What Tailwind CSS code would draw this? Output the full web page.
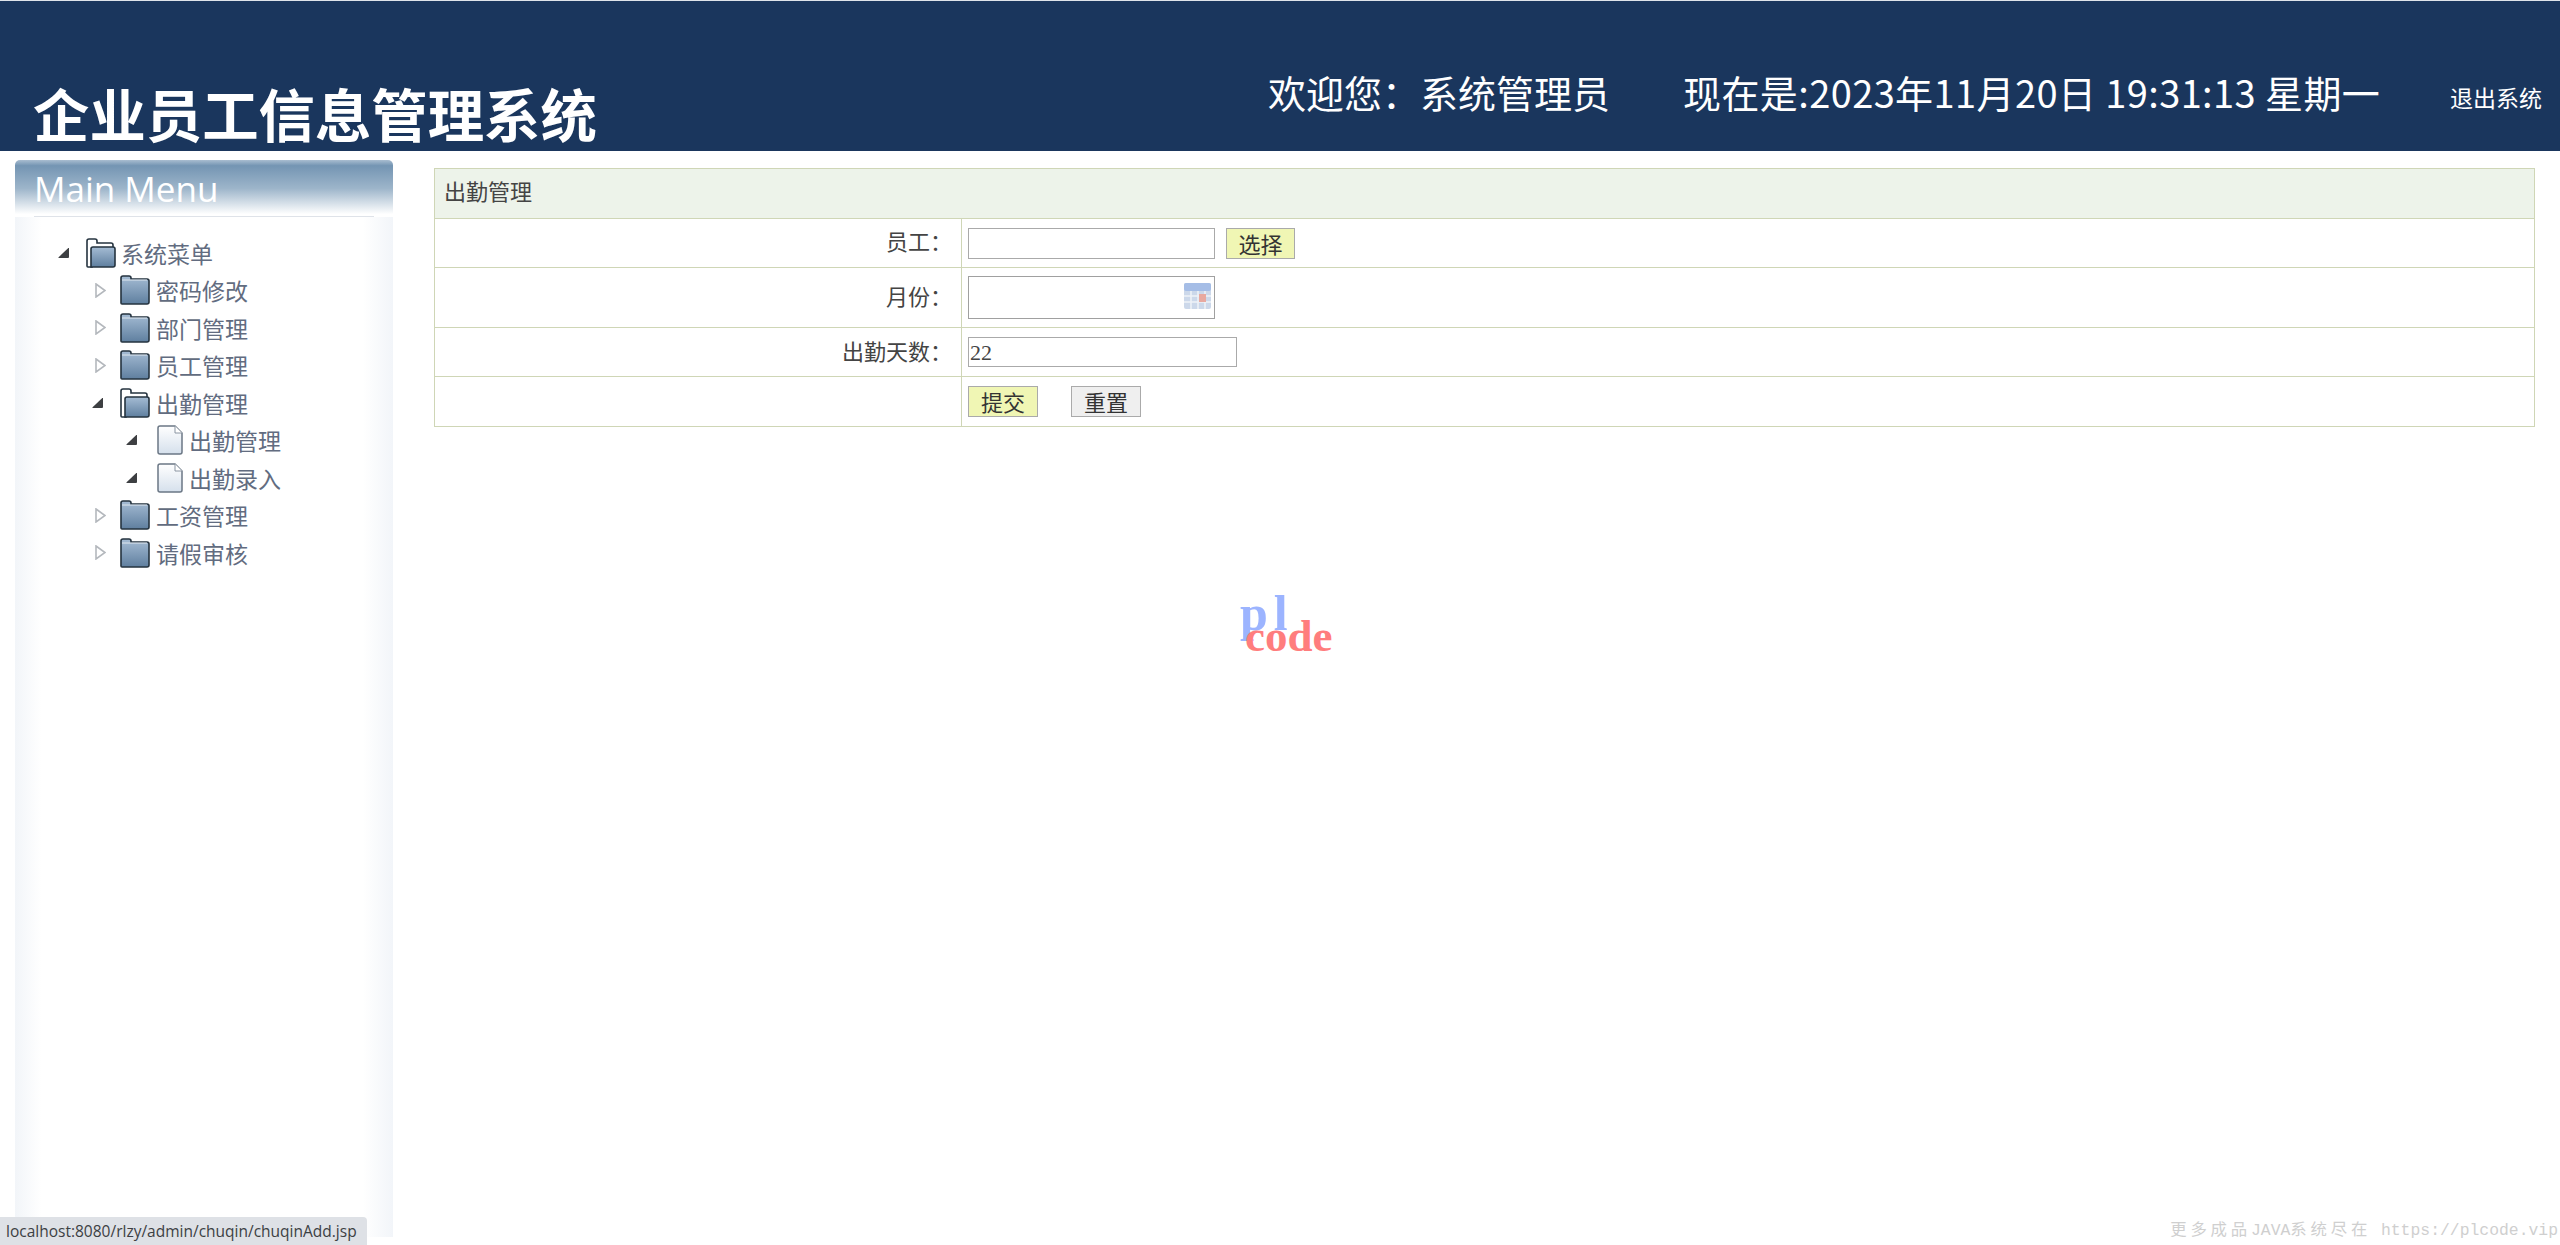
<!DOCTYPE html>
<html lang="zh">
<head>
  <meta charset="UTF-8" />
  <title>企业员工信息管理系统</title>
  <script src="https://cdn.jsdelivr.net/npm/@tailwindcss/browser@4"></script>
</head>
<body class="relative h-screen overflow-hidden bg-white font-['Noto_Sans_CJK_SC',sans-serif]">

  <!-- icons used by the tree -->
  <svg class="absolute w-0 h-0">
    <defs>
      <linearGradient id="folderFill" x1="0" y1="0" x2="0" y2="1">
        <stop offset="0" stop-color="#a5bcd4" />
        <stop offset="1" stop-color="#5f7f9f" />
      </linearGradient>
      <linearGradient id="fileFill" x1="0" y1="0" x2="0" y2="1">
        <stop offset="0" stop-color="#ffffff" />
        <stop offset="1" stop-color="#d5e0ec" />
      </linearGradient>
    </defs>
    <symbol id="folder-closed" viewBox="0 0 30 30">
      <path d="M1 28V3q0-2 2-2h6q2 0 2 2v1h16q2 0 2 2v21q0 2-2 2H2q-1 0-1-1z" fill="url(#folderFill)" stroke="#25333f" stroke-width="1.6" />
      <path d="M2 5h25" stroke="#dfe7ef" stroke-width="1" />
    </symbol>
    <symbol id="folder-open" viewBox="0 0 30 30">
      <path d="M1 28V3q0-2 2-2h6q2 0 2 2v2h14q2 0 2 2v3H6v19H2q-1 0-1-1z" fill="#fff" stroke="#25333f" stroke-width="1.6" />
      <path d="M5 29V11q0-2 2-2h20q2 0 2 2v16q0 2-2 2z" fill="url(#folderFill)" stroke="#25333f" stroke-width="1.6" />
    </symbol>
    <symbol id="file" viewBox="0 0 26 30">
      <path d="M1 3q0-2 2-2h15l7 7v19q0 2-2 2H3q-2 0-2-2z" fill="url(#fileFill)" stroke="#6b7785" stroke-width="1.5" />
      <path d="M18 1v7h7" fill="#fff" stroke="#8a95a2" stroke-width="1" />
    </symbol>
    <symbol id="arrow-closed" viewBox="0 0 11 15">
      <path d="M1 1l9 6.500-9 6.500z" fill="#fff" stroke="#b4b8bd" stroke-width="1.600" />
    </symbol>
    <symbol id="arrow-open" viewBox="0 0 12 10">
      <path d="M11 0v9q0 1-1 1H1q-1 0-.4-.8L10 .2q1-.9 1-.2z" fill="#3d3f42" />
    </symbol>
  </svg>

  <!-- Header -->
  <header class="h-[151px] bg-[#1a365d] border-t border-[#dfe4ea] flex items-end text-white">
    <h1 class="ml-[33px] mb-[-2px] text-[56.400px] leading-[80px] font-bold">企业员工信息管理系统</h1>
    <div class="ml-auto flex items-center self-end h-[112px] pr-[18px] text-[38px] whitespace-nowrap">
      <span class="w-[415px] mb-[8px]">欢迎您：系统管理员</span>
      <span class="w-[767px] mb-[8px] tracking-[0.4px]">现在是:2023年11月20日 19:31:13 星期一</span>
      <a href="#" class="text-[23px] mt-[4px]">退出系统</a>
    </div>
  </header>

  <div class="flex items-start">
    <!-- Left menu -->
    <aside class="w-[378px] h-[1077px] ml-[15px] mt-[9px] shrink-0 rounded-t-[5px] bg-[linear-gradient(to_right,#f2f5f9,#ffffff_7%,#ffffff_92%,#f2f5f9)]">
      <div class="h-[57px] rounded-t-[5px] bg-[linear-gradient(to_bottom,#a9bdd0,#7495b3_10%,#9db5ca_50%,#ffffff_95%)]">
        <div class="mx-[19px] h-[57px] border-b border-[#dfe3e9] text-[35px] leading-[58px] text-white font-['Open_Sans',sans-serif]">Main Menu</div>
      </div>
      <ul class="mt-[17px] text-[23px] text-[#626c80]">
        <li class="h-[37.5px] flex items-center pl-[43px]">
          <svg class="w-[12px] h-[10px] mr-[16px]"><use href="#arrow-open" /></svg>
          <svg class="w-[30px] h-[30px] mr-[5px]"><use href="#folder-open" /></svg>系统菜单
        </li>
        <li class="h-[37.5px] flex items-center pl-[80px]">
          <svg class="w-[11px] h-[15px] mr-[14px]"><use href="#arrow-closed" /></svg>
          <svg class="w-[30px] h-[30px] mr-[6px]"><use href="#folder-closed" /></svg>密码修改
        </li>
        <li class="h-[37.5px] flex items-center pl-[80px]">
          <svg class="w-[11px] h-[15px] mr-[14px]"><use href="#arrow-closed" /></svg>
          <svg class="w-[30px] h-[30px] mr-[6px]"><use href="#folder-closed" /></svg>部门管理
        </li>
        <li class="h-[37.5px] flex items-center pl-[80px]">
          <svg class="w-[11px] h-[15px] mr-[14px]"><use href="#arrow-closed" /></svg>
          <svg class="w-[30px] h-[30px] mr-[6px]"><use href="#folder-closed" /></svg>员工管理
        </li>
        <li class="h-[37.5px] flex items-center pl-[77px]">
          <svg class="w-[12px] h-[10px] mr-[16px]"><use href="#arrow-open" /></svg>
          <svg class="w-[30px] h-[30px] mr-[6px]"><use href="#folder-open" /></svg>出勤管理
        </li>
        <li class="h-[37.5px] flex items-center pl-[111px]">
          <svg class="w-[12px] h-[10px] mr-[19px]"><use href="#arrow-open" /></svg>
          <svg class="w-[26px] h-[30px] mr-[6px]"><use href="#file" /></svg>出勤管理
        </li>
        <li class="h-[37.5px] flex items-center pl-[111px]">
          <svg class="w-[12px] h-[10px] mr-[19px]"><use href="#arrow-open" /></svg>
          <svg class="w-[26px] h-[30px] mr-[6px]"><use href="#file" /></svg>出勤录入
        </li>
        <li class="h-[37.5px] flex items-center pl-[80px]">
          <svg class="w-[11px] h-[15px] mr-[14px]"><use href="#arrow-closed" /></svg>
          <svg class="w-[30px] h-[30px] mr-[6px]"><use href="#folder-closed" /></svg>工资管理
        </li>
        <li class="h-[37.5px] flex items-center pl-[80px]">
          <svg class="w-[11px] h-[15px] mr-[14px]"><use href="#arrow-closed" /></svg>
          <svg class="w-[30px] h-[30px] mr-[6px]"><use href="#folder-closed" /></svg>请假审核
        </li>
      </ul>
    </aside>

    <!-- Form -->
    <main class="ml-[41px] mt-[17px] w-[2101px] shrink-0 text-[22px] text-[#444] font-['Liberation_Serif','Noto_Sans_CJK_SC',serif]">
      <table class="w-full table-fixed border-collapse">
        <colgroup>
          <col class="w-[527px]" />
          <col />
        </colgroup>
        <tbody>
          <tr class="h-[50px]">
            <td colspan="2" class="border border-[#cfd6b6] bg-[#edf3ea] pl-[9px] pb-[2px]">出勤管理</td>
          </tr>
          <tr class="h-[49px]">
            <td class="border border-[#cfd6b6] text-right pr-[9px] pb-[2px]">员工：</td>
            <td class="border border-[#cfd6b6] pl-[6px]">
              <div class="flex gap-[11px]">
                <input type="text" class="w-[247px] h-[31px] border border-[#aaa] bg-white" />
                <button class="w-[69px] h-[31px] pb-[2px] border border-[#aaa] bg-[#f0f6b4] text-[#333]">选择</button>
              </div>
            </td>
          </tr>
          <tr class="h-[60px]">
            <td class="border border-[#cfd6b6] text-right pr-[9px]">月份：</td>
            <td class="border border-[#cfd6b6] pl-[6px]">
              <div class="w-[247px] h-[43px] border border-[#a0a0a0] flex items-center justify-end pr-[3px]">
                <svg class="w-[27px] h-[26px] mb-[3px] blur-[0.5px]" viewBox="0 0 27 26">
                  <rect width="27" height="26" rx="2" fill="#ccd8ea" />
                  <rect width="27" height="8" rx="2" fill="#a5bde6" />
                  <path d="M0 13h27M0 19h27M7 8v18M14 8v18M21 8v18" stroke="#eef2f8" stroke-width="1.500" />
                  <rect x="15" y="11" width="7" height="8" fill="#e8a9a0" />
                </svg>
              </div>
            </td>
          </tr>
          <tr class="h-[49px]">
            <td class="border border-[#cfd6b6] text-right pr-[9px]">出勤天数：</td>
            <td class="border border-[#cfd6b6] pl-[6px]">
              <input type="text" value="22" class="block w-[269px] h-[30px] border border-[#aaa] pl-[1px] bg-white" />
            </td>
          </tr>
          <tr class="h-[50px]">
            <td class="border border-[#cfd6b6]"></td>
            <td class="border border-[#cfd6b6] pl-[6px]">
              <div class="flex gap-[33px]">
                <button class="w-[70px] h-[31px] pb-[2px] border border-[#aaa] bg-[#f0f6b4] text-[#333]">提交</button>
                <button class="w-[70px] h-[31px] pb-[2px] border border-[#aaa] bg-[#efefef] text-[#333]">重置</button>
              </div>
            </td>
          </tr>
        </tbody>
      </table>
    </main>
  </div>

  <!-- Watermark logo floating over the page -->
  <div class="absolute left-[1240px] top-[589px] font-['Liberation_Serif',serif] font-bold text-[50px] leading-[48px] tracking-[6px] text-[#9cb4ff]">pl</div>
  <div class="absolute left-[1245px] top-[614px] font-['Liberation_Serif',serif] font-bold text-[45px] leading-[44px] text-[#ff7d7d]">code</div>

  <!-- Browser status bubble -->
  <div class="absolute left-0 bottom-0 w-[367px] h-[28px] rounded-tr-[4px] bg-[#dee1e6] pl-[6px] text-[15.500px] leading-[28px] text-[#3c4043] font-['Open_Sans',sans-serif] whitespace-nowrap">localhost:8080/rlzy/admin/chuqin/chuqinAdd.jsp</div>

  <!-- Corner watermark text -->
  <div class="absolute right-[2px] bottom-[4px] text-[16.400px] leading-[20px] text-[#cfcfcf] font-['Liberation_Mono','Noto_Sans_CJK_SC',monospace] whitespace-nowrap"><span class="tracking-[3.800px]">更多成品</span>JAVA<span class="tracking-[3.800px]">系统尽在</span> https://plcode.vip</div>

</body>
</html>
